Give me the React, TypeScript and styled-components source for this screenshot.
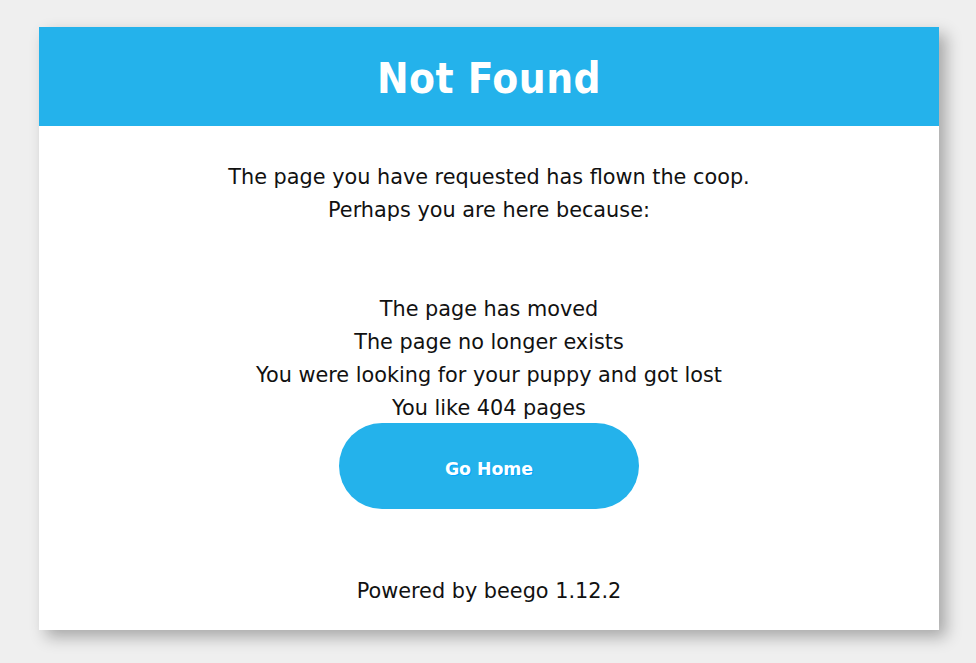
import React from "react";
import styled, { createGlobalStyle } from "styled-components";

const Global = createGlobalStyle`
  * { margin: 0; padding: 0; box-sizing: border-box; }
  html, body { background: #efefef; }
  body {
    font-family: "DejaVu Sans", "Lucida Sans Unicode", sans-serif;
    font-size: 20.8px;
    min-height: 663px;
    padding: 27px 0 33px 39px;
  }
`;

const Wrapper = styled.div`
  width: 900px;
  background: #ffffff;
  box-shadow: 7px 7px 15px rgba(0, 0, 0, 0.3);
  text-align: center;
  display: flex;
  flex-direction: column;
`;

const NavTop = styled.div`
  height: 99px;
  background: #24b2eb;
  display: flex;
  align-items: center;
  justify-content: center;
`;

const Title = styled.h1`
  color: #fff;
  font-size: 42px;
  font-weight: bold;
  font-family: "DejaVu Sans Condensed", "DejaVu Sans", sans-serif;
  letter-spacing: 0.5px;
  padding-top: 4px;
`;

const Content = styled.div`
  padding: 35px 0 22px;
  color: #111;
  display: flex;
  flex-direction: column;
  align-items: center;
`;

const Line = styled.p`
  line-height: 33px;
  height: 33px;
  white-space: nowrap;
`;

const Button = styled.a`
  width: 300px;
  height: 86px;
  margin-top: -2px;
  border-radius: 100px;
  background: #24b2eb;
  color: #fff;
  font-weight: bold;
  font-size: 17.3px;
  text-decoration: none;
  text-shadow: 1px 1px 0 #00a5ff;
  display: flex;
  align-items: center;
  justify-content: center;
  padding-top: 6px;
  margin-bottom: 66px;
`;

export default function App() {
  return (
    <>
      <Global />
      <Wrapper>
        <NavTop>
          <Title>Not Found</Title>
        </NavTop>
        <Content>
          <Line>The page you have requested has flown the coop.</Line>
          <Line>Perhaps you are here because:</Line>
          <Line />
          <Line />
          <Line>The page has moved</Line>
          <Line>The page no longer exists</Line>
          <Line>You were looking for your puppy and got lost</Line>
          <Line>You like 404 pages</Line>
          <Button href="/">Go Home</Button>
          <Line>Powered by beego 1.12.2</Line>
        </Content>
      </Wrapper>
    </>
  );
}
